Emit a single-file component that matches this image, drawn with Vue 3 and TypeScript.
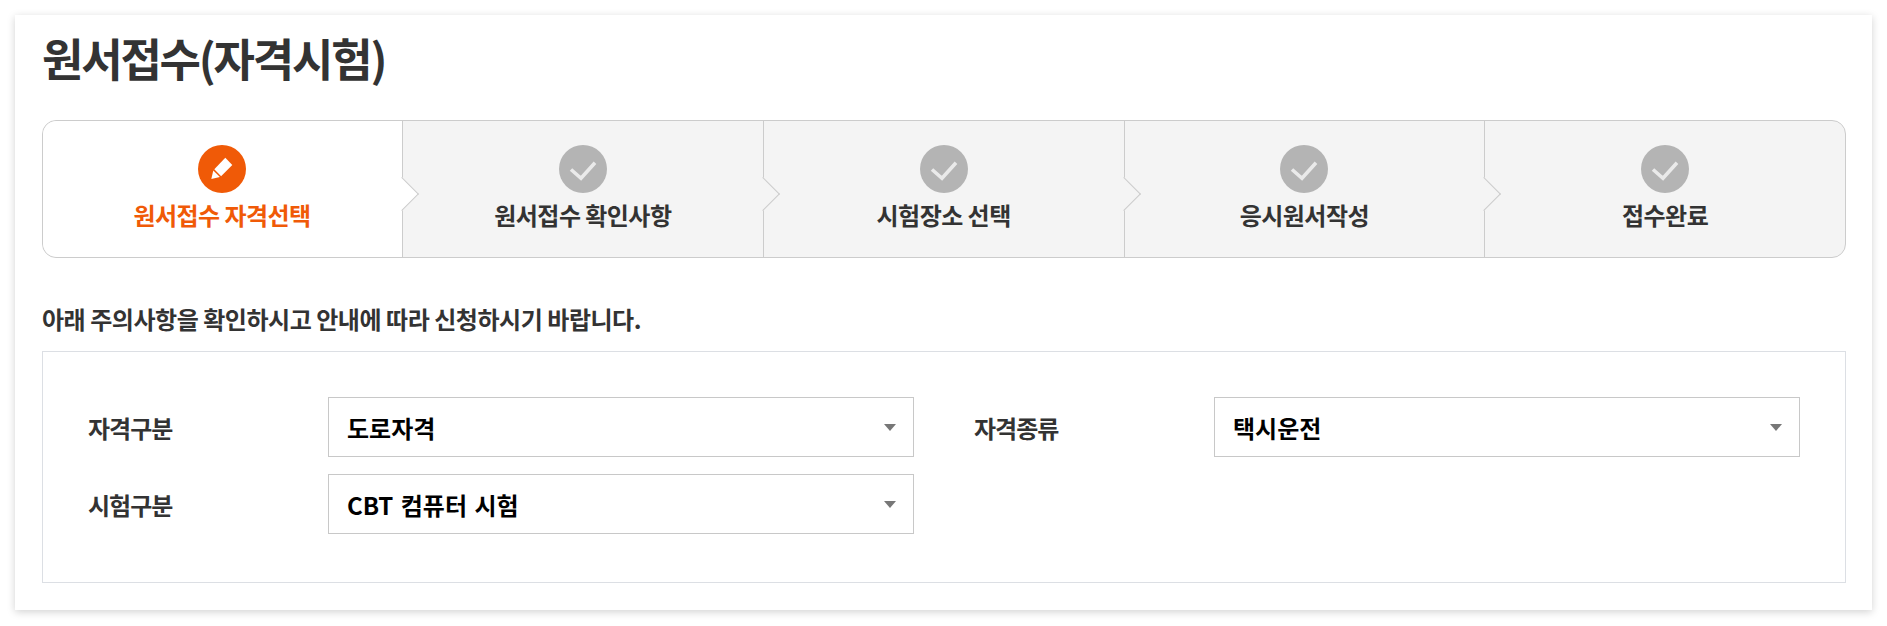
<template>
  <div class="page">
    <div class="card">
      <h2 class="title">원서접수(자격시험)</h2>

      <ol class="steps">
        <li v-for="(step, i) in steps" :key="step" class="step" :class="{ active: i === 0 }">
          <span class="step-icon">
            <svg v-if="i === 0" width="48" height="48" viewBox="0 0 48 48">
              <path d="M27.3 12.7l7 7.3-11.2 11.2-6.8-6.9z" fill="#fff" />
              <path d="M15.3 25.6l6.6 6.5-8.6 1.9z" fill="#fff" />
            </svg>
            <svg v-else width="48" height="48" viewBox="0 0 48 48">
              <path d="M12 24.5l10 8.8 14-15.5" fill="none" stroke="#eaeaea" stroke-width="3.6" />
            </svg>
          </span>
          <span class="step-label">{{ step }}</span>
        </li>
      </ol>

      <p class="notice">아래 주의사항을 확인하시고 안내에 따라 신청하시기 바랍니다.</p>

      <div class="panel">
        <div class="field">
          <label class="field-label">자격구분</label>
          <div class="select-wrap">
            <select v-model="category" class="select">
              <option>도로자격</option>
            </select>
          </div>
        </div>
        <div class="field">
          <label class="field-label">자격종류</label>
          <div class="select-wrap">
            <select v-model="kind" class="select">
              <option>택시운전</option>
            </select>
          </div>
        </div>
        <div class="field">
          <label class="field-label">시험구분</label>
          <div class="select-wrap">
            <select v-model="examType" class="select">
              <option>CBT 컴퓨터 시험</option>
            </select>
          </div>
        </div>
      </div>
    </div>
  </div>
</template>

<script setup lang="ts">
import { ref } from 'vue'

const steps = ['원서접수 자격선택', '원서접수 확인사항', '시험장소 선택', '응시원서작성', '접수완료']

const category = ref('도로자격')
const kind = ref('택시운전')
const examType = ref('CBT 컴퓨터 시험')
</script>

<style>
html,
body {
  background: #fff;
}
</style>

<style scoped>
.page {
  height: 626px;
  padding: 15px 15px 16px;
  box-sizing: border-box;
  font-family: "Noto Sans CJK KR", "Noto Sans", sans-serif;
  color: #333;
}

.card {
  height: 100%;
  box-sizing: border-box;
  padding: 0 26px 0 27px;
  background: #fff;
  box-shadow: 0 2px 8px rgba(0, 0, 0, 0.18);
}

.title {
  margin: 0 0 15px;
  padding-top: 13px;
  height: 77px;
  font-size: 45px;
  line-height: 60px;
  font-weight: 700;
  letter-spacing: -2.2px;
}

.steps {
  display: grid;
  grid-template-columns: 359px repeat(4, 1fr);
  margin: 0;
  padding: 0;
  height: 138px;
  box-sizing: border-box;
  list-style: none;
  border: 1px solid #ccc;
  border-radius: 14px;
  background: #f4f4f4;
}

.step {
  position: relative;
  display: flex;
  flex-direction: column;
  align-items: center;
  padding-top: 24px;
  border-left: 1px solid #ccc;
}

.step:first-child {
  border-left: none;
}

.step.active {
  padding-right: 1px;
  background: #fff;
  border-radius: 14px 0 0 14px;
}

/* arrow into the next step */
.step:not(:last-child)::after {
  content: '';
  position: absolute;
  z-index: 1;
  top: 61px;
  right: -12px;
  width: 24px;
  height: 24px;
  box-sizing: border-box;
  background: #f4f4f4;
  border-top: 1px solid #ccc;
  border-right: 1px solid #ccc;
  transform: rotate(45deg);
}

.step.active::after {
  background: #fff;
}

.step-icon {
  width: 48px;
  height: 48px;
  border-radius: 50%;
  background: #b4b4b4;
}

.step-icon svg {
  display: block;
}

.active .step-icon {
  background: #f05a07;
}

.step-label {
  margin-top: 5px;
  font-size: 24px;
  line-height: 34px;
  font-weight: 700;
  letter-spacing: -0.55px;
}

.active .step-label {
  color: #f05a07;
}

.notice {
  margin: 42px 0 13px;
  font-size: 24px;
  line-height: 38px;
  font-weight: 700;
  letter-spacing: -0.47px;
}

.panel {
  display: grid;
  grid-template-columns: repeat(2, 826px);
  column-gap: 60px;
  row-gap: 17px;
  height: 232px;
  box-sizing: border-box;
  padding: 45px 45px 0;
  align-content: start;
  border: 1px solid #dcdfe4;
}

.field {
  display: flex;
  align-items: center;
}

.field-label {
  width: 240px;
  flex: none;
  font-size: 24px;
  font-weight: 700;
  letter-spacing: -1px;
}

.select-wrap {
  position: relative;
  flex: 1;
}

.select-wrap::after {
  content: '';
  position: absolute;
  top: 27px;
  right: 18px;
  border-style: solid;
  border-width: 7px 6px 0;
  border-color: #777 transparent transparent;
}

.select {
  display: block;
  width: 100%;
  height: 60px;
  padding: 0 40px 0 18px;
  box-sizing: border-box;
  appearance: none;
  background: #fff;
  border: 1px solid #c8c8c8;
  border-radius: 0;
  font-family: inherit;
  font-size: 24px;
  font-weight: 700;
  word-spacing: 2px;
  color: #000;
}
</style>
